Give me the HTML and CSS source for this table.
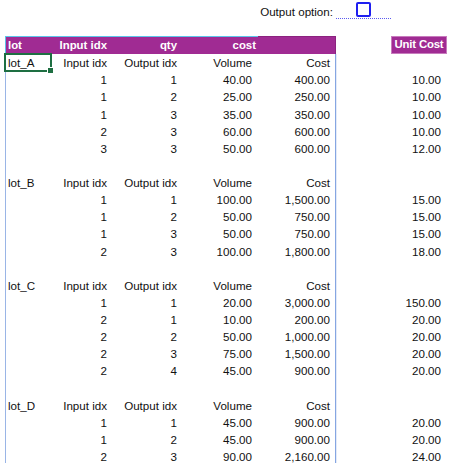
FILE: index.html
```html
<!DOCTYPE html>
<html>
<head>
<meta charset="utf-8">
<link rel="stylesheet" href="styles.css">
</head>
<body>
<div class="top">
  <span class="opt-label">Output option:</span>
  <div class="opt-box"><span class="check"></span></div>
</div>
<div class="sheet">
  <div class="tbl">
    <div class="thead">
      <div class="c l">lot</div><div class="c r">Input idx</div><div class="c r">qty</div><div class="c r c4h">cost</div><div class="c"></div>
    </div>
    <div class="tbody">
      <div class="c l">lot_A</div><div class="c r">Input idx</div><div class="c r">Output idx</div><div class="c r c4">Volume</div><div class="c r c5">Cost</div>
      <div class="c"></div><div class="c r">1</div><div class="c r">1</div><div class="c r c4">40.00</div><div class="c r c5">400.00</div>
      <div class="c"></div><div class="c r">1</div><div class="c r">2</div><div class="c r c4">25.00</div><div class="c r c5">250.00</div>
      <div class="c"></div><div class="c r">1</div><div class="c r">3</div><div class="c r c4">35.00</div><div class="c r c5">350.00</div>
      <div class="c"></div><div class="c r">2</div><div class="c r">3</div><div class="c r c4">60.00</div><div class="c r c5">600.00</div>
      <div class="c"></div><div class="c r">3</div><div class="c r">3</div><div class="c r c4">50.00</div><div class="c r c5">600.00</div>
      <div class="c"></div><div class="c"></div><div class="c"></div><div class="c"></div><div class="c"></div>
      <div class="c l">lot_B</div><div class="c r">Input idx</div><div class="c r">Output idx</div><div class="c r c4">Volume</div><div class="c r c5">Cost</div>
      <div class="c"></div><div class="c r">1</div><div class="c r">1</div><div class="c r c4">100.00</div><div class="c r c5">1,500.00</div>
      <div class="c"></div><div class="c r">1</div><div class="c r">2</div><div class="c r c4">50.00</div><div class="c r c5">750.00</div>
      <div class="c"></div><div class="c r">1</div><div class="c r">3</div><div class="c r c4">50.00</div><div class="c r c5">750.00</div>
      <div class="c"></div><div class="c r">2</div><div class="c r">3</div><div class="c r c4">100.00</div><div class="c r c5">1,800.00</div>
      <div class="c"></div><div class="c"></div><div class="c"></div><div class="c"></div><div class="c"></div>
      <div class="c l">lot_C</div><div class="c r">Input idx</div><div class="c r">Output idx</div><div class="c r c4">Volume</div><div class="c r c5">Cost</div>
      <div class="c"></div><div class="c r">1</div><div class="c r">1</div><div class="c r c4">20.00</div><div class="c r c5">3,000.00</div>
      <div class="c"></div><div class="c r">2</div><div class="c r">1</div><div class="c r c4">10.00</div><div class="c r c5">200.00</div>
      <div class="c"></div><div class="c r">2</div><div class="c r">2</div><div class="c r c4">50.00</div><div class="c r c5">1,000.00</div>
      <div class="c"></div><div class="c r">2</div><div class="c r">3</div><div class="c r c4">75.00</div><div class="c r c5">1,500.00</div>
      <div class="c"></div><div class="c r">2</div><div class="c r">4</div><div class="c r c4">45.00</div><div class="c r c5">900.00</div>
      <div class="c"></div><div class="c"></div><div class="c"></div><div class="c"></div><div class="c"></div>
      <div class="c l">lot_D</div><div class="c r">Input idx</div><div class="c r">Output idx</div><div class="c r c4">Volume</div><div class="c r c5">Cost</div>
      <div class="c"></div><div class="c r">1</div><div class="c r">1</div><div class="c r c4">45.00</div><div class="c r c5">900.00</div>
      <div class="c"></div><div class="c r">1</div><div class="c r">2</div><div class="c r c4">45.00</div><div class="c r c5">900.00</div>
      <div class="c"></div><div class="c r">2</div><div class="c r">3</div><div class="c r c4">90.00</div><div class="c r c5">2,160.00</div>
    </div>
    <div class="sel"><span class="handle"></span></div>
  </div>
  <div class="uc">
    <div class="uc-head">Unit Cost</div>
    <div class="c"></div>
    <div class="c r">10.00</div>
    <div class="c r">10.00</div>
    <div class="c r">10.00</div>
    <div class="c r">10.00</div>
    <div class="c r">12.00</div>
    <div class="c"></div>
    <div class="c"></div>
    <div class="c r">15.00</div>
    <div class="c r">15.00</div>
    <div class="c r">15.00</div>
    <div class="c r">18.00</div>
    <div class="c"></div>
    <div class="c"></div>
    <div class="c r">150.00</div>
    <div class="c r">20.00</div>
    <div class="c r">20.00</div>
    <div class="c r">20.00</div>
    <div class="c r">20.00</div>
    <div class="c"></div>
    <div class="c"></div>
    <div class="c r">20.00</div>
    <div class="c r">20.00</div>
    <div class="c r">24.00</div>
  </div>
</div>
</body>
</html>
```
FILE: styles.css
```css
html, body {
  margin: 0;
  padding: 0;
  background: #ffffff;
}
body {
  width: 452px;
  height: 463px;
  overflow: hidden;
  font-family: "Liberation Sans", Arial, sans-serif;
  font-size: 11.6px;
  color: #111111;
}
.top {
  height: 36px;
  display: flex;
  justify-content: flex-end;
  align-items: flex-start;
  padding-right: 61px;
}
.opt-label {
  margin-top: 3px;
  line-height: 17px;
  margin-right: 3px;
}
.opt-box {
  width: 55px;
  height: 19px;
  border-bottom: 1px dotted #5b5bf0;
  box-sizing: border-box;
  display: flex;
  align-items: flex-start;
}
.check {
  display: block;
  width: 15px;
  height: 15px;
  box-sizing: border-box;
  margin-left: 20px;
  margin-top: 2px;
  border: 2px solid #1f1ff0;
  border-radius: 2px;
}
.sheet {
  display: flex;
  align-items: flex-start;
}
.tbl {
  position: relative;
  margin-left: 5px;
  width: 331px;
}
.thead, .tbody {
  display: grid;
  grid-template-columns: 45px 59px 70px 76px 79px;
  grid-auto-rows: 17.13px;
  box-sizing: border-box;
}
.thead {
  background: #a02b93;
  color: #ffffff;
  font-weight: bold;
  font-size: 11.4px;
  border-top: 1px solid #5cc3ea;
  border-image: linear-gradient(to right, #5cc3ea 253px, #8b237f 253px) 1;
  border-left: 1px solid #a02b93;
  border-right: 1px solid #a02b93;
  height: 18.13px;
}
.tbody {
  border-left: 1px solid #9ab5e6;
  border-right: 1px solid #86a6e2;
  box-shadow: 1px 0 0 #e4ebf8;
}
.c {
  line-height: 17.13px;
  white-space: nowrap;
  overflow: visible;
}
.l { text-align: left; padding-left: 2px; }
.r { text-align: right; padding-right: 3px; }
.c4 { padding-right: 4px; }
.c4h { padding-right: 0; }
.c5 { padding-right: 5px; }
.sel {
  position: absolute;
  left: -1px;
  top: 17px;
  width: 48px;
  height: 19px;
  box-sizing: border-box;
  border: 2px solid #1e6f42;
}
.handle {
  position: absolute;
  right: -4px;
  bottom: -4px;
  width: 5px;
  height: 5px;
  background: #1e6f42;
  border: 1px solid #ffffff;
}
.uc {
  margin-left: 55px;
  width: 56px;
  display: grid;
  grid-auto-rows: 17.13px;
  padding-top: 1px;
}
.uc .r { padding-right: 6px; }
.uc-head {
  background: #a02b93;
  color: #ffffff;
  font-weight: bold;
  font-size: 11.4px;
  line-height: 15px;
  text-align: center;
  box-sizing: border-box;
  border: 1px solid #c77bbd;
  margin-top: -1px;
  height: 18px;
  white-space: nowrap;
  letter-spacing: -0.2px;
}
```
